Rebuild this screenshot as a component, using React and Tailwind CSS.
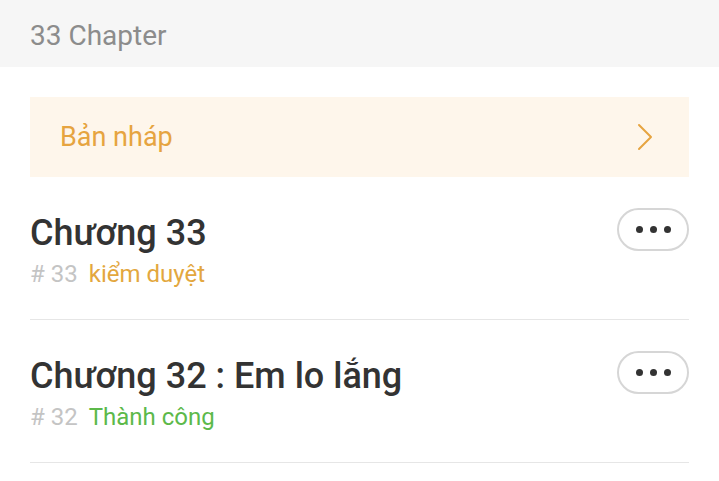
const chapters = [
  { id: 33, title: 'Chương 33', status: 'kiểm duyệt', statusClass: 'text-[#e3a73e]' },
  { id: 32, title: 'Chương 32 : Em lo lắng', status: 'Thành công', statusClass: 'text-[#5cb94a]' },
];

function MoreButton() {
  return (
    <button className="flex h-[43px] w-[72px] shrink-0 items-center justify-center gap-[7px] rounded-full border-2 border-[#d6d6d6] bg-white">
      <span className="h-[7px] w-[7px] rounded-full bg-[#333]" />
      <span className="h-[7px] w-[7px] rounded-full bg-[#333]" />
      <span className="h-[7px] w-[7px] rounded-full bg-[#333]" />
    </button>
  );
}

export default function App() {
  return (
    <div className="h-[481px] w-[719px] overflow-hidden bg-white" style={{ fontFamily: 'Roboto, "Noto Sans", sans-serif' }}>
      {/* Header */}
      <div className="flex h-[67px] items-center bg-[#f6f6f6] px-[30px] pt-[4px]">
        <span className="text-[28px] leading-none text-[#8c8c8c]">33 Chapter</span>
      </div>

      <div className="px-[30px]">
        {/* Draft banner */}
        <div className="mt-[30px] flex h-[80px] items-center justify-between bg-[#fef6eb] pl-[30px] pr-[36px]">
          <span className="text-[27px] leading-none text-[#e6a440]">Bản nháp</span>
          <svg width="16" height="28" viewBox="0 0 16 28" fill="none" className="text-[#e6a440]">
            <path d="M2 2 L14 14 L2 26" stroke="currentColor" strokeWidth="2" strokeLinecap="round" strokeLinejoin="round" />
          </svg>
        </div>

        {/* Chapter list */}
        {chapters.map((ch) => (
          <div key={ch.id} className="flex h-[143px] items-start justify-between border-b border-[#e6e6e6] pt-[31px]">
            <div className="pt-[5px]">
              <div className="text-[36px] font-medium leading-[40px] text-[#333]">{ch.title}</div>
              <div className="mt-[6px] flex items-center text-[24px] leading-[30px]">
                <span className="text-[#c4c4c4]"># {ch.id}</span>
                <span className={`ml-[11px] ${ch.statusClass}`}>{ch.status}</span>
              </div>
            </div>
            <MoreButton />
          </div>
        ))}
      </div>
    </div>
  );
}
